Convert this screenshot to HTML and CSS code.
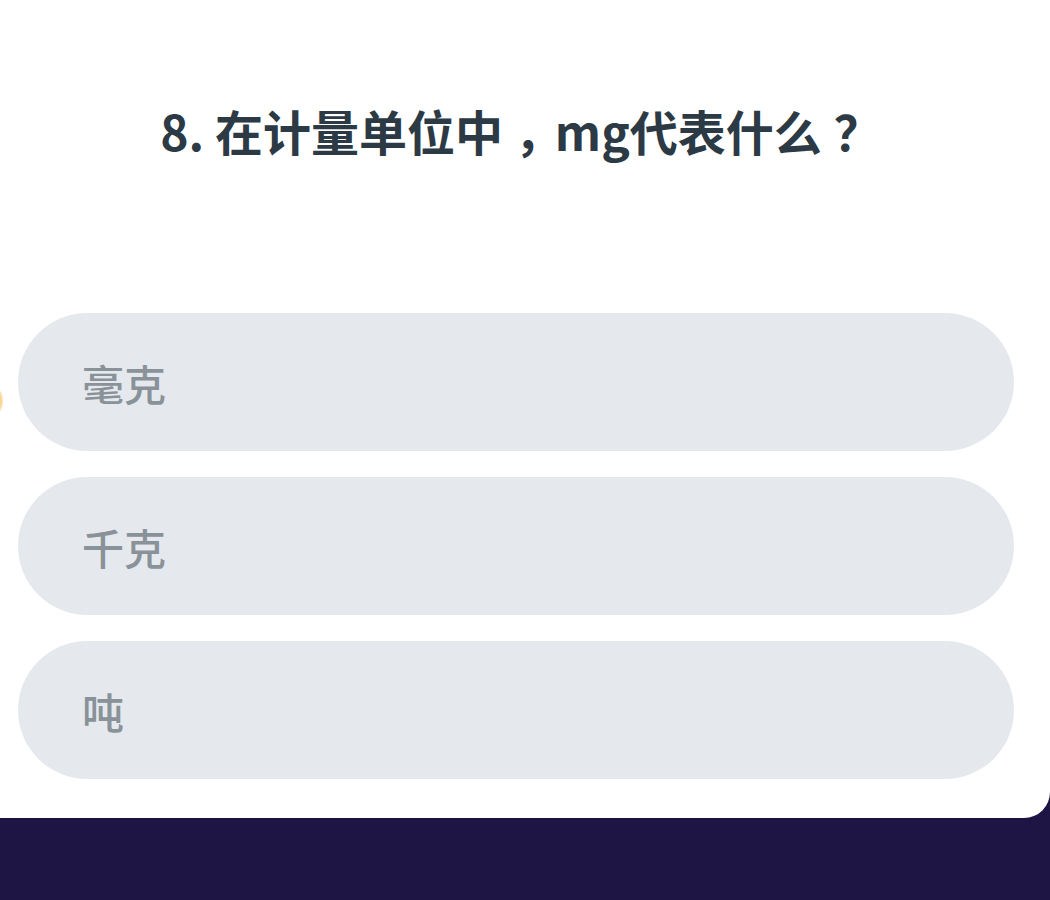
FILE: index.html
```html
<!DOCTYPE html>
<html lang="zh">
<head>
<meta charset="utf-8">
<link rel="stylesheet" href="styles.css">
</head>
<body>
<div class="screen">
  <div class="card">
    <span class="deco"></span>
    <h1 class="question">8. 在计量单位中<span class="punct comma">，</span>mg代表什么<span class="punct ask">？</span></h1>
    <div class="options">
      <div class="option">毫克</div>
      <div class="option">千克</div>
      <div class="option">吨</div>
    </div>
  </div>
</div>
</body>
</html>
```
FILE: styles.css
```css
html, body {
  margin: 0;
  padding: 0;
}
body {
  background: #1e1544;
  width: 1050px;
  height: 900px;
  overflow: hidden;
  font-family: "Noto Sans CJK SC", "Noto Sans", sans-serif;
}
.screen {
  width: 1050px;
  height: 900px;
  overflow: hidden;
}
.card {
  position: relative;
  margin-left: -30px;
  width: 1080px;
  height: 818px;
  box-sizing: border-box;
  background: #ffffff;
  border-radius: 0 0 26px 26px;
  padding: 95px 36px 0 48px;
  box-shadow: 0 1px 1px rgba(0,0,0,0.12);
}
.deco {
  position: absolute;
  left: 24px;
  top: 390px;
  width: 9px;
  height: 22px;
  border-radius: 50%;
  background: radial-gradient(ellipse at center, #f7c46a 0%, rgba(247,196,106,0.6) 50%, rgba(247,196,106,0) 100%);
}
.question {
  margin: 0;
  text-align: center;
  font-size: 48px;
  line-height: 70px;
  font-weight: 700;
  color: #2c3a46;
  padding-left: 10px;
  white-space: nowrap;
}
.punct {
  display: inline-block;
  box-sizing: border-box;
  text-align: left;
  vertical-align: top;
}
.punct.comma {
  width: 1.08em;
  padding-left: 0.24em;
}
.punct.ask {
  width: 1.25em;
  padding-left: 0.25em;
}
.options {
  display: flex;
  flex-direction: column;
  gap: 26px;
  margin-top: 148px;
}
.option {
  height: 138px;
  border-radius: 69px;
  background: #e5e9ee;
  display: flex;
  align-items: center;
  padding-left: 64px;
  font-size: 42px;
  color: #8a9299;
  font-weight: 500;
}
```
